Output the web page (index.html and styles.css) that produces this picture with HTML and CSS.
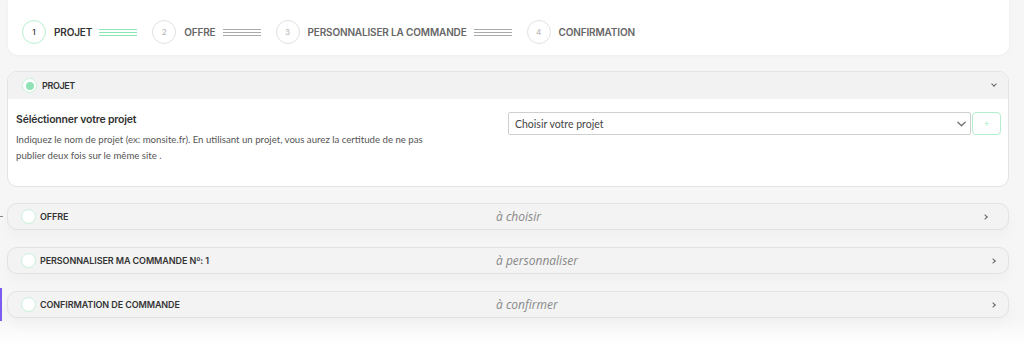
FILE: index.html
```html
<!DOCTYPE html>
<html lang="fr">
<head>
<meta charset="utf-8">
<title>Commande</title>
<link rel="stylesheet" href="styles.css">
</head>
<body>
<span class="edge-mark"></span>
<span class="edge-bar"></span>
<div class="page">
  <div class="stepper">
    <div class="step step-active">
      <span class="step-num">1</span>
      <span class="step-label">PROJET</span>
      <span class="step-lines"></span>
    </div>
    <div class="step">
      <span class="step-num">2</span>
      <span class="step-label">OFFRE</span>
      <span class="step-lines"></span>
    </div>
    <div class="step">
      <span class="step-num">3</span>
      <span class="step-label">PERSONNALISER LA COMMANDE</span>
      <span class="step-lines"></span>
    </div>
    <div class="step">
      <span class="step-num">4</span>
      <span class="step-label">CONFIRMATION</span>
    </div>
  </div>

  <div class="section section-open">
    <div class="section-head">
      <span class="radio radio-on"></span>
      <span class="section-title">PROJET</span>
      <span class="chev chev-down"></span>
    </div>
    <div class="section-body">
      <div class="body-text">
        <h3 class="body-title">Séléctionner votre projet</h3>
        <p class="body-desc">Indiquez le nom de projet (ex: monsite.fr). En utilisant un projet, vous aurez la certitude de ne pas publier deux fois sur le même site .</p>
      </div>
      <div class="picker">
        <div class="select">
          <span class="select-text">Choisir votre projet</span>
          <svg class="select-arrow" viewBox="0 0 10 6" width="9" height="6"><path d="M1 1 L5 5 L9 1" fill="none" stroke="#777" stroke-width="1.6" stroke-linecap="round"/></svg>
        </div>
        <button class="add-btn">+</button>
      </div>
    </div>
  </div>

  <div class="row">
    <span class="radio"></span>
    <span class="row-title">OFFRE</span>
    <span class="row-status">à choisir</span>
    <span class="chev chev-right chev-first"></span>
  </div>
  <div class="row">
    <span class="radio"></span>
    <span class="row-title">PERSONNALISER MA COMMANDE Nº: 1</span>
    <span class="row-status">à personnaliser</span>
    <span class="chev chev-right"></span>
  </div>
  <div class="row">
    <span class="radio"></span>
    <span class="row-title">CONFIRMATION DE COMMANDE</span>
    <span class="row-status">à confirmer</span>
    <span class="chev chev-right"></span>
  </div>
</div>
</body>
</html>
```

FILE: styles.css
```css
* { box-sizing: border-box; }
html, body { margin: 0; padding: 0; }
body {
  width: 1024px;
  height: 353px;
  overflow: hidden;
  background: #fff linear-gradient(#f6f6f6 0, #f6f6f6 318px, #ffffff 346px) no-repeat;
  font-family: "Inter", "Liberation Sans", sans-serif;
  color: #333;
  position: relative;
}
.edge-mark {
  position: absolute; left: 0; top: 216px; width: 3px; height: 1px; background: #888;
}
.edge-bar {
  position: absolute; left: 0; top: 288px; width: 2px; height: 33px; background: #7b5cf0;
}
.page {
  padding: 0 15px 0 7px;
  display: flex;
  flex-direction: column;
}

/* stepper */
.stepper {
  margin-left: 1px;
  height: 55px;
  background: #fff;
  border-radius: 0 0 10px 10px;
  box-shadow: 0 1px 4px rgba(0,0,0,0.04);
  display: flex;
  align-items: center;
  padding: 9px 0 0 14px;
}
.step {
  display: flex;
  align-items: center;
  margin-right: 15px;
}
.step-num {
  width: 24px; height: 24px;
  border: 1.5px solid #e2e2e2;
  border-radius: 50%;
  display: flex; align-items: center; justify-content: center;
  font-size: 8px;
  color: #bbb;
  font-weight: 500;
}
.step-label {
  margin-left: 8px;
  font-size: 10px;
  font-weight: 600;
  letter-spacing: -0.15px;
  color: #666;
}
.step-lines {
  margin-left: 7px;
  width: 38px;
  height: 7px;
  border-top: 1px solid #aaa;
  border-bottom: 1px solid #aaa;
  position: relative;
}
.step-lines::after {
  content: "";
  position: absolute; left: 0; right: 0; top: 2px;
  border-top: 1px solid #aaa;
}
.step-active .step-num { border-color: #b4efcf; color: #333; }
.step-active .step-label { color: #333; }
.step-active .step-lines,
.step-active .step-lines::after { border-color: #8be6b3; }

/* open section */
.section {
  margin-top: 16px;
  background: #fff;
  border: 1px solid #e3e3e3;
  border-radius: 10px;
  overflow: hidden;
}
.section-head {
  height: 27px;
  background: #f2f2f2;
  display: flex;
  align-items: center;
  padding: 0 12px 0 14px;
}
.radio {
  width: 15px; height: 15px;
  border-radius: 50%;
  border: 1.5px solid #c6f1da;
  background: #fff;
  flex: none;
  display: flex; align-items: center; justify-content: center;
}
.radio-on::after {
  content: "";
  width: 8px; height: 8px; border-radius: 50%;
  background: #8fe2b6;
}
.section-title {
  margin-left: 5px;
  font-size: 9px;
  font-weight: 600;
  letter-spacing: -0.4px;
  color: #333;
}
.chev {
  margin-left: auto;
  width: 4px; height: 4px;
  border-right: 1.2px solid #666;
  border-bottom: 1.2px solid #666;
}
.chev-down { transform: rotate(45deg); margin-top: -3px; }
.chev-right { transform: rotate(-45deg); }

.section-body {
  height: 87px;
  display: grid;
  grid-template-columns: 492px 1fr;
  padding: 14px 7px 0 8px;
}
.body-title {
  margin: 0;
  font-size: 10.5px;
  font-weight: 600;
  letter-spacing: -0.2px;
  color: #333;
  line-height: 14px;
}
.body-desc {
  margin: 4px 0 0;
  font-family: "Lato", "Liberation Sans", sans-serif;
  font-size: 9.65px;
  line-height: 16px;
  color: #555;
  width: 430px;
}
.picker {
  display: flex;
  margin-top: -1px;
  height: 23px;
}
.select {
  flex: 1;
  border: 1px solid #cfcfcf;
  border-radius: 2px;
  display: flex;
  align-items: center;
  padding: 0 4px 0 6px;
}
.select-text {
  font-family: "Lato", "Liberation Sans", sans-serif;
  font-size: 10.5px;
  color: #444;
}
.select-arrow { margin-left: auto; }
.add-btn {
  width: 29px;
  margin-left: 1px;
  border: 1px solid #b3efcf;
  border-radius: 4px;
  background: #fff;
  color: #a6ecc6;
  font-size: 9px;
  padding: 0;
  font-family: "Lato", sans-serif;
}

/* collapsed rows */
.row {
  margin-top: 17px;
  height: 27px;
  background: #f3f3f3;
  border: 1px solid #e2e2e2;
  border-radius: 10px;
  display: flex;
  align-items: center;
  padding: 0 13px 0 13px;
  box-shadow: 0 6px 14px rgba(0,0,0,0.03);
}
.section + .row { margin-top: 16px; }
.row-title {
  margin-left: 4px;
  width: 456px;
  font-size: 9px;
  font-weight: 600;
  letter-spacing: -0.1px;
  color: #333;
}
.row-status {
  font-family: "Open Sans", "Liberation Sans", sans-serif;
  font-style: italic;
  font-size: 12px;
  color: #888;
}
.chev-first { margin-right: 8px; }
```
